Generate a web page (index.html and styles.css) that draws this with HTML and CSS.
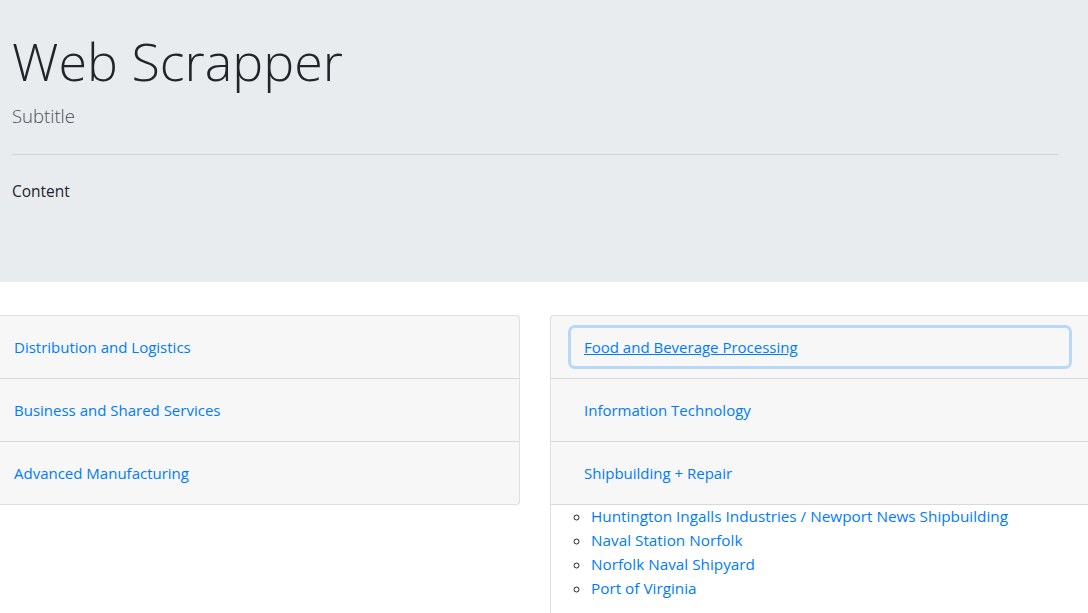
FILE: index.html
```html
<!DOCTYPE html>
<html lang="en">
<head>
<meta charset="utf-8">
<title>Web Scrapper</title>
<link rel="stylesheet" href="styles.css">
</head>
<body>
<header class="jumbotron">
  <h1 class="display">Web Scrapper</h1>
  <p class="lead">Subtitle</p>
  <hr class="divider">
  <p class="content">Content</p>
</header>
<main class="accordions">
  <section class="card">
    <div class="card-header"><a class="btn-link" href="#">Distribution and Logistics</a></div>
    <div class="card-header"><a class="btn-link" href="#">Business and Shared Services</a></div>
    <div class="card-header last"><a class="btn-link" href="#">Advanced Manufacturing</a></div>
  </section>
  <section class="card">
    <div class="card-header"><a class="btn-link focused" href="#">Food and Beverage Processing</a></div>
    <div class="card-header"><a class="btn-link" href="#">Information Technology</a></div>
    <div class="card-header"><a class="btn-link" href="#">Shipbuilding + Repair</a></div>
    <div class="card-body">
      <ul class="sublist">
        <li><a href="#">Huntington Ingalls Industries / Newport News Shipbuilding</a></li>
        <li><a href="#">Naval Station Norfolk</a></li>
        <li><a href="#">Norfolk Naval Shipyard</a></li>
        <li><a href="#">Port of Virginia</a></li>
      </ul>
    </div>
  </section>
</main>
</body>
</html>
```
FILE: styles.css
```css
html, body {
  margin: 0;
  padding: 0;
}
body {
  font-family: "Open Sans", "Noto Sans", sans-serif;
  font-size: 15px;
  line-height: 24px;
  color: #212529;
  background: #fff;
  overflow: hidden;
}
.jumbotron {
  background: #e9ecef;
  padding: 27px 30px 0 12px;
  height: 282px;
  box-sizing: border-box;
}
.display {
  margin: 0;
  font-size: 52px;
  font-weight: 300;
  line-height: 67px;
  color: #212529;
}
.lead {
  margin: 7px 0 0;
  font-size: 18.5px;
  line-height: 30px;
  font-weight: 300;
  color: #495057;
}
.divider {
  margin: 23px 0 0;
  border: 0;
  border-top: 1px solid rgba(0,0,0,.1);
  height: 0;
}
.content {
  margin: 24px 0 0;
  font-size: 15.5px;
}
.accordions {
  display: flex;
  align-items: flex-start;
  gap: 30px;
  margin: 33px 0 0 -20px;
}
.card {
  box-sizing: border-box;
  width: 540px;
  flex: none;
  border: 1px solid rgba(0,0,0,.125);
  border-radius: 4px;
  background: #fff;
}
.card-header {
  padding: 12px 20px;
  background: rgba(0,0,0,.03);
  border-bottom: 1px solid rgba(0,0,0,.125);
}
.card-header.last {
  border-bottom: 0;
}
.btn-link {
  display: block;
  padding: 6px 12px;
  border: 1px solid transparent;
  border-radius: 4px;
  line-height: 24px;
  color: #007bff;
  text-decoration: none;
}
.btn-link.focused {
  text-decoration: underline;
  box-shadow: 0 0 0 3px rgba(0,123,255,.25);
}
.card-body {
  padding: 0 0 16px;
}
.sublist {
  margin: -1px 0 0;
  padding-left: 40px;
  list-style: circle;
  font-size: 15.3px;
}
.sublist a {
  color: #007bff;
  text-decoration: none;
}
```
